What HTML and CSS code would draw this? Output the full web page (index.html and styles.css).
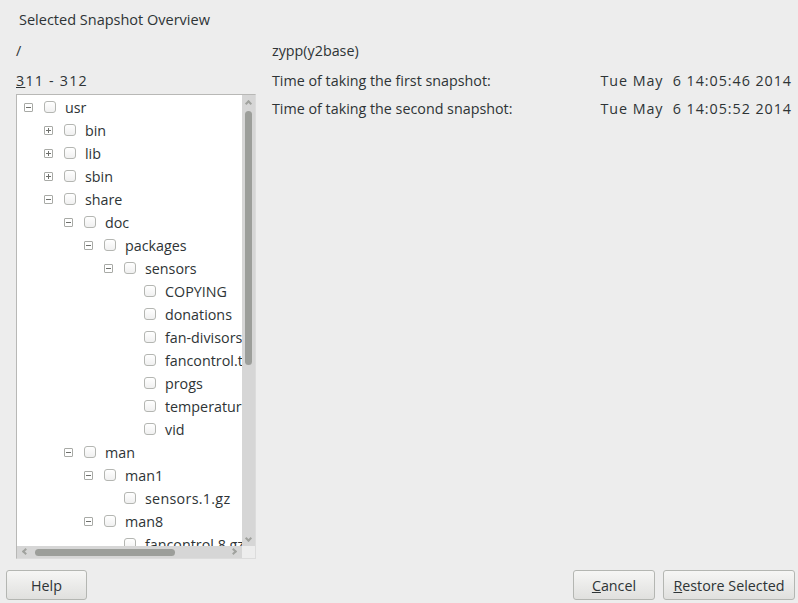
FILE: index.html
```html
<!DOCTYPE html>
<html>
<head>
<meta charset="utf-8">
<link rel="stylesheet" href="styles.css">
</head>
<body>
<div class="dialog">
  <div class="title">Selected Snapshot Overview</div>
  <div class="main">
    <div class="left">
      <div class="line">/</div>
      <div class="line gap num"><span class="ul">3</span>11 - 312</div>
      <div class="tree">
        <div class="viewport">
          <div class="row l0"><span class="exp minus"></span><span class="cb"></span><span class="name">usr</span></div>
          <div class="row l1"><span class="exp plus"></span><span class="cb"></span><span class="name">bin</span></div>
          <div class="row l1"><span class="exp plus"></span><span class="cb"></span><span class="name">lib</span></div>
          <div class="row l1"><span class="exp plus"></span><span class="cb"></span><span class="name">sbin</span></div>
          <div class="row l1"><span class="exp minus"></span><span class="cb"></span><span class="name">share</span></div>
          <div class="row l2"><span class="exp minus"></span><span class="cb"></span><span class="name">doc</span></div>
          <div class="row l3"><span class="exp minus"></span><span class="cb"></span><span class="name">packages</span></div>
          <div class="row l4"><span class="exp minus"></span><span class="cb"></span><span class="name">sensors</span></div>
          <div class="row l5"><span class="exp"></span><span class="cb"></span><span class="name">COPYING</span></div>
          <div class="row l5"><span class="exp"></span><span class="cb"></span><span class="name">donations</span></div>
          <div class="row l5"><span class="exp"></span><span class="cb"></span><span class="name">fan-divisors</span></div>
          <div class="row l5"><span class="exp"></span><span class="cb"></span><span class="name">fancontrol.txt</span></div>
          <div class="row l5"><span class="exp"></span><span class="cb"></span><span class="name">progs</span></div>
          <div class="row l5"><span class="exp"></span><span class="cb"></span><span class="name">temperature</span></div>
          <div class="row l5"><span class="exp"></span><span class="cb"></span><span class="name">vid</span></div>
          <div class="row l2"><span class="exp minus"></span><span class="cb"></span><span class="name">man</span></div>
          <div class="row l3"><span class="exp minus"></span><span class="cb"></span><span class="name">man1</span></div>
          <div class="row l4"><span class="exp"></span><span class="cb"></span><span class="name numlite">sensors.1.gz</span></div>
          <div class="row l3"><span class="exp minus"></span><span class="cb"></span><span class="name">man8</span></div>
          <div class="row l4"><span class="exp"></span><span class="cb"></span><span class="name">fancontrol.8.gz</span></div>
        </div>
        <div class="vscroll">
          <span class="arrow up"></span>
          <div class="vtrack"><div class="vthumb"></div></div>
          <span class="arrow down"></span>
        </div>
        <div class="hscroll">
          <span class="arrow lt"></span>
          <div class="htrack"><div class="hthumb"></div></div>
          <span class="arrow rt"></span>
        </div>
        <div class="corner"></div>
      </div>
    </div>
    <div class="right">
      <div class="line">zypp(y2base)</div>
      <div class="line gap pair"><span>Time of taking the first snapshot:</span><span class="date">Tue May &nbsp;6 14:05:46 2014</span></div>
      <div class="line gap2 pair"><span>Time of taking the second snapshot:</span><span class="date">Tue May &nbsp;6 14:05:52 2014</span></div>
    </div>
  </div>
  <div class="footer">
    <button class="btn help">Help</button>
    <div class="spacer"></div>
    <button class="btn cancel"><span class="ul">C</span>ancel</button>
    <button class="btn restore"><span class="ul">R</span>estore Selected</button>
  </div>
</div>
</body>
</html>
```

FILE: styles.css
```css
html, body {
  margin: 0;
  padding: 0;
}
body {
  width: 798px;
  height: 603px;
  overflow: hidden;
  background: #ededed;
  color: #2e3436;
  font-family: "Open Sans", "Noto Sans", sans-serif;
  font-size: 14.3px;
}
.dialog {
  display: flex;
  flex-direction: column;
  height: 603px;
}
.title {
  height: 41px;
  line-height: 40px;
  padding-left: 19px;
  font-size: 14.5px;
}
.main {
  display: flex;
  padding-left: 16px;
}
.left {
  width: 240px;
  display: flex;
  flex-direction: column;
}
.right {
  width: 519px;
  margin-left: 16px;
  display: flex;
  flex-direction: column;
}
.line {
  height: 20px;
  line-height: 20px;
  white-space: nowrap;
}
.gap { margin-top: 10px; }
.gap2 { margin-top: 8px; }
.num { letter-spacing: 1.2px; }
.numlite { letter-spacing: 0.3px; }
.date { letter-spacing: 0.95px; margin-right: -0.95px; }
.pair {
  display: flex;
  justify-content: space-between;
}
.ul { text-decoration: underline; }
.tree {
  margin-top: 3px;
  height: 465px;
  box-sizing: border-box;
  border: 1px solid #b8b8b6;
  border-right-color: #dcdcdc;
  border-bottom-color: #dcdcdc;
  background: #ffffff;
  display: grid;
  grid-template-columns: 225px 13px;
  grid-template-rows: 451px 12px;
}
.viewport {
  overflow: hidden;
  padding-top: 1px;
}
.row {
  height: 23px;
  display: flex;
  align-items: center;
  white-space: nowrap;
}
.l0 { padding-left: 7px; }
.l1 { padding-left: 27px; }
.l2 { padding-left: 47px; }
.l3 { padding-left: 67px; }
.l4 { padding-left: 87px; }
.l5 { padding-left: 107px; }
.exp {
  width: 9px;
  height: 9px;
  box-sizing: border-box;
  flex: none;
  position: relative;
  margin-right: 11px;
}
.exp.minus, .exp.plus {
  border: 1px solid #a8aaa6;
  border-radius: 1px;
}
.exp.minus::before, .exp.plus::before {
  content: "";
  position: absolute;
  left: 1px;
  top: 3px;
  width: 5px;
  height: 1px;
  background: #6e706c;
}
.exp.plus::after {
  content: "";
  position: absolute;
  left: 3px;
  top: 1px;
  width: 1px;
  height: 5px;
  background: #6e706c;
}
.cb {
  width: 12px;
  height: 12px;
  box-sizing: border-box;
  border: 1px solid #b4b6b2;
  border-radius: 3px;
  background: linear-gradient(#ffffff, #f0f0f0);
  flex: none;
  margin-right: 9px;
  margin-top: -2px;
}
.name {
  line-height: 20px;
}
.vscroll {
  background: #d6d6d6;
  display: flex;
  flex-direction: column;
  align-items: center;
}
.vtrack {
  flex: 1;
  width: 7px;
  position: relative;
}
.vthumb {
  position: absolute;
  left: 0;
  top: 2px;
  width: 7px;
  height: 254px;
  border-radius: 4px;
  background: #9c9e9a;
}
.hscroll {
  background: #d6d6d6;
  display: flex;
  align-items: center;
}
.htrack {
  flex: 1;
  height: 7px;
  position: relative;
}
.hthumb {
  position: absolute;
  left: 4px;
  top: 0;
  width: 140px;
  height: 7px;
  border-radius: 4px;
  background: #9c9e9a;
}
.corner {
  background: #ededed;
}
.arrow {
  width: 13px;
  height: 12px;
  flex: none;
  position: relative;
}
.arrow::before {
  content: "";
  position: absolute;
  width: 3px;
  height: 3px;
  border-top: 2px solid #a0a29e;
  border-left: 2px solid #a0a29e;
}
.arrow.up { height: 14px; }
.arrow.up::before { left: 4px; top: 6px; transform: rotate(45deg); }
.arrow.down::before { left: 4px; top: 2px; transform: rotate(225deg); }
.arrow.lt { width: 14px; }
.arrow.lt::before { left: 6px; top: 3px; transform: rotate(-45deg); }
.arrow.rt::before { left: 2px; top: 3px; transform: rotate(135deg); }
.footer {
  margin-top: auto;
  display: flex;
  padding: 0 3px 3px 6px;
  gap: 8px;
}
.spacer { flex: 1; }
.btn {
  font: inherit;
  color: #2e3436;
  height: 30px;
  box-sizing: border-box;
  border: 1px solid #b4b6b2;
  border-radius: 3px;
  background: linear-gradient(#f6f6f5, #e0e0de);
  padding: 0;
}
.help { width: 81px; }
.cancel { width: 82px; }
.restore { width: 132px; }
```
